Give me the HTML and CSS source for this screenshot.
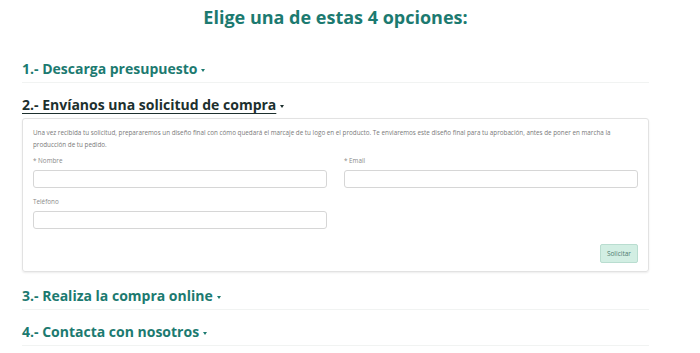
FILE: index.html
```html
<!DOCTYPE html>
<html lang="es">
<head>
  <meta charset="UTF-8" />
  <meta name="viewport" content="width=device-width, initial-scale=1" />
  <title>Elige una opción</title>
  <link rel="stylesheet" href="styles.css">
</head>
<body>
  <div class="opciones">
    <h2 class="titulo">Elige una de estas 4 opciones:</h2>

    <div class="opcion">
      <a class="opcion-cabecera">1.- Descarga presupuesto<span class="caret"></span></a>
    </div>

    <div class="opcion abierta">
      <a class="opcion-cabecera">2.- Envíanos una solicitud de compra<span class="caret"></span></a>
      <div class="opcion-cuerpo">
        <p class="intro">Una vez recibida tu solicitud, prepararemos un diseño final con cómo quedará el marcaje de tu logo en el producto. Te enviaremos este diseño final para tu aprobación, antes de poner en marcha la producción de tu pedido.</p>
        <form class="form-solicitud">
          <div class="campo">
            <label>* Nombre</label>
            <input type="text">
          </div>
          <div class="campo">
            <label>* Email</label>
            <input type="email">
          </div>
          <div class="campo">
            <label>Teléfono</label>
            <input type="tel">
          </div>
          <div class="acciones">
            <button type="button" class="btn-solicitar">Solicitar</button>
          </div>
        </form>
      </div>
    </div>

    <div class="opcion">
      <a class="opcion-cabecera">3.- Realiza la compra online<span class="caret"></span></a>
    </div>

    <div class="opcion">
      <a class="opcion-cabecera">4.- Contacta con nosotros<span class="caret"></span></a>
    </div>
  </div>
</body>
</html>
```

FILE: styles.css
```css
body {
  margin: 0;
  background: #fff;
  font-family: "Open Sans", sans-serif;
}
.opciones {
  width: 627px;
  margin-left: 22px;
  padding-top: 5px;
}
.titulo {
  margin: 0 0 18px;
  text-align: center;
  font-family: "Open Sans", sans-serif;
  font-weight: 700;
  font-size: 18px;
  line-height: 24px;
  color: #1c7a70;
}
.opcion {
  border-bottom: 1px solid #f1f3f2;
}
.opcion-cabecera {
  display: block;
  padding: 12px 0 3px;
  font-weight: 700;
  font-size: 14px;
  line-height: 20px;
  color: #1c7a70;
  cursor: pointer;
}
.caret {
  display: inline-block;
  margin-left: 4px;
  vertical-align: middle;
  border-top: 3px solid currentColor;
  border-left: 2.5px solid transparent;
  border-right: 2.5px solid transparent;
}
.abierta {
  border-bottom: none;
}
.abierta .opcion-cabecera {
  color: #1d302e;
  text-decoration: underline;
  text-underline-offset: 3px;
  padding-bottom: 2px;
}
.opcion-cuerpo {
  margin: 1px 0 2px;
  border: 1px solid #e2e2e2;
  border-radius: 3px;
  box-shadow: 0 1px 2px rgba(0,0,0,0.08);
  padding: 8px 10px 8px;
}
.intro {
  margin: 0 0 5px;
  font-size: 6.3px;
  line-height: 12px;
  color: #7a7a7a;
}
.form-solicitud {
  display: grid;
  grid-template-columns: 1fr 1fr;
  column-gap: 17px;
  row-gap: 9px;
}
.campo label {
  display: block;
  font-size: 6.3px;
  line-height: 10px;
  margin-bottom: 4px;
  color: #8a8a8a;
}
.campo input {
  display: block;
  box-sizing: border-box;
  width: 100%;
  height: 18px;
  border: 1px solid #d6d6d6;
  border-radius: 3px;
  background: #fff;
}
.acciones {
  grid-column: 1 / 3;
  display: flex;
  justify-content: flex-end;
  padding-top: 6px;
}
.btn-solicitar {
  height: 19px;
  padding: 0 6px;
  border: 1px solid #b9ddd0;
  border-radius: 2px;
  background: #d2eee3;
  color: #4f7a70;
  font-family: "Open Sans", sans-serif;
  font-size: 6.5px;
  cursor: pointer;
}
```
